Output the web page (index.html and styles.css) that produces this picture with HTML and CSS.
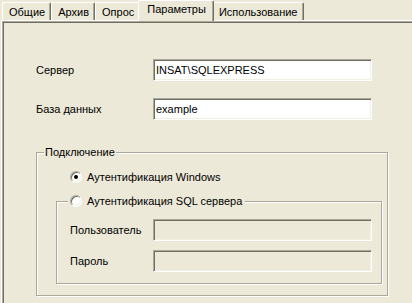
FILE: index.html
```html
<!DOCTYPE html>
<html lang="ru">
<head>
  <meta charset="UTF-8" />
  <title>Параметры</title>
  <link rel="stylesheet" href="styles.css">
</head>
<body>
  <div class="tabs">
    <div class="tab">Общие</div>
    <div class="tab">Архив</div>
    <div class="tab">Опрос</div>
    <div class="tab active">Параметры</div>
    <div class="tab">Использование</div>
  </div>

  <div class="page">
    <div class="frame">
      <div class="fields">
        <div class="row">
          <label for="server">Сервер</label>
          <input type="text" id="server" value="INSAT\SQLEXPRESS" />
        </div>
        <div class="row">
          <label for="db">База данных</label>
          <input type="text" id="db" value="example" />
        </div>
      </div>

      <div class="group">
        <span class="group-title">Подключение</span>
        <div class="radio checked"><span class="mark"></span>Аутентификация Windows</div>

        <div class="group inner">
          <div class="radio group-title"><span class="mark"></span>Аутентификация SQL сервера</div>
          <div class="row">
            <label for="user">Пользователь</label>
            <input type="text" id="user" disabled />
          </div>
          <div class="row">
            <label for="pass">Пароль</label>
            <input type="password" id="pass" disabled />
          </div>
        </div>
      </div>
    </div>
  </div>
</body>
</html>
```

FILE: styles.css
```css
* {
  box-sizing: border-box;
}

body {
  margin: 0;
  background: #ece9d8;
  font: 11px "Liberation Sans", Arial, sans-serif;
  color: #000;
  overflow: hidden;
}

/* tab strip */
.tabs {
  display: flex;
  align-items: flex-end;
  height: 20px;
  padding-left: 2px;
  position: relative;
  z-index: 1;
}

.tab {
  height: 18px;
  padding: 2px 5px 0 6px;
  border: 1px solid;
  border-color: #fff #716f64 transparent #fff;
  border-bottom: 0;
  border-radius: 2px 2px 0 0;
  box-shadow: inset -1px 0 0 #aca899;
  line-height: 14px;
  white-space: nowrap;
}

.tab.active {
  position: relative;
  height: 21px;
  margin: 0 -2px -1px;
  padding: 1px 7px 0 8px;
  background: #ece9d8;
}

/* tab page */
.page {
  margin-left: 1px;
  height: 283px;
  border-top: 1px solid #fff;
  border-left: 1px solid #fff;
}

.frame {
  height: 100%;
  border-top: 1px solid #aca899;
  border-left: 1px solid #aca899;
  box-shadow: inset 1px 1px 0 #716f64;
}

.fields {
  display: flex;
  flex-direction: column;
  gap: 17px;
  padding: 37px 0 0 33px;
}

.row {
  display: flex;
  align-items: center;
  height: 22px;
}

.row label {
  width: 117px;
}

input {
  width: 219px;
  height: 22px;
  padding: 0 2px;
  border: 1px solid;
  border-color: #aca899 #fff #fff #aca899;
  box-shadow: inset 1px 1px 0 #716f64, inset -1px -1px 0 #f1efe2;
  background: #fff;
  font: inherit;
  color: #000;
  outline: none;
}

input:disabled {
  background: #ece9d8;
}

/* group boxes */
.group {
  position: relative;
  width: 352px;
  height: 144px;
  margin: 32px 0 0 33px;
  padding: 18px 0 0 33px;
  border: 1px solid #aca899;
  box-shadow: 1px 1px 0 #fff, inset 1px 1px 0 #fff;
}

.group-title {
  position: absolute;
  top: -7px;
  left: 7px;
  padding: 0 1px;
  line-height: 13px;
  background: #ece9d8;
}

.radio {
  display: flex;
  align-items: center;
  gap: 5px;
  height: 12px;
  line-height: 12px;
}

.mark {
  position: relative;
  width: 12px;
  height: 12px;
  border-radius: 50%;
  border: 1px solid;
  border-color: #aca899 #fff #fff #aca899;
  box-shadow: inset 1px 1px 0 #716f64, inset -1px -1px 0 #f1efe2;
  background: #fff;
}

.checked .mark::after {
  content: "";
  position: absolute;
  left: 3px;
  top: 3px;
  width: 4px;
  height: 4px;
  border-radius: 50%;
  background: #000;
}

.group.inner {
  display: flex;
  flex-direction: column;
  gap: 9px;
  width: 326px;
  height: 83px;
  margin: 18px 0 0 -14px;
  padding: 17px 0 0 13px;
}

.inner .group-title {
  top: -7px;
  left: 11px;
  padding: 0 3px 0 2px;
}

.inner .row label {
  width: 83px;
}
```
